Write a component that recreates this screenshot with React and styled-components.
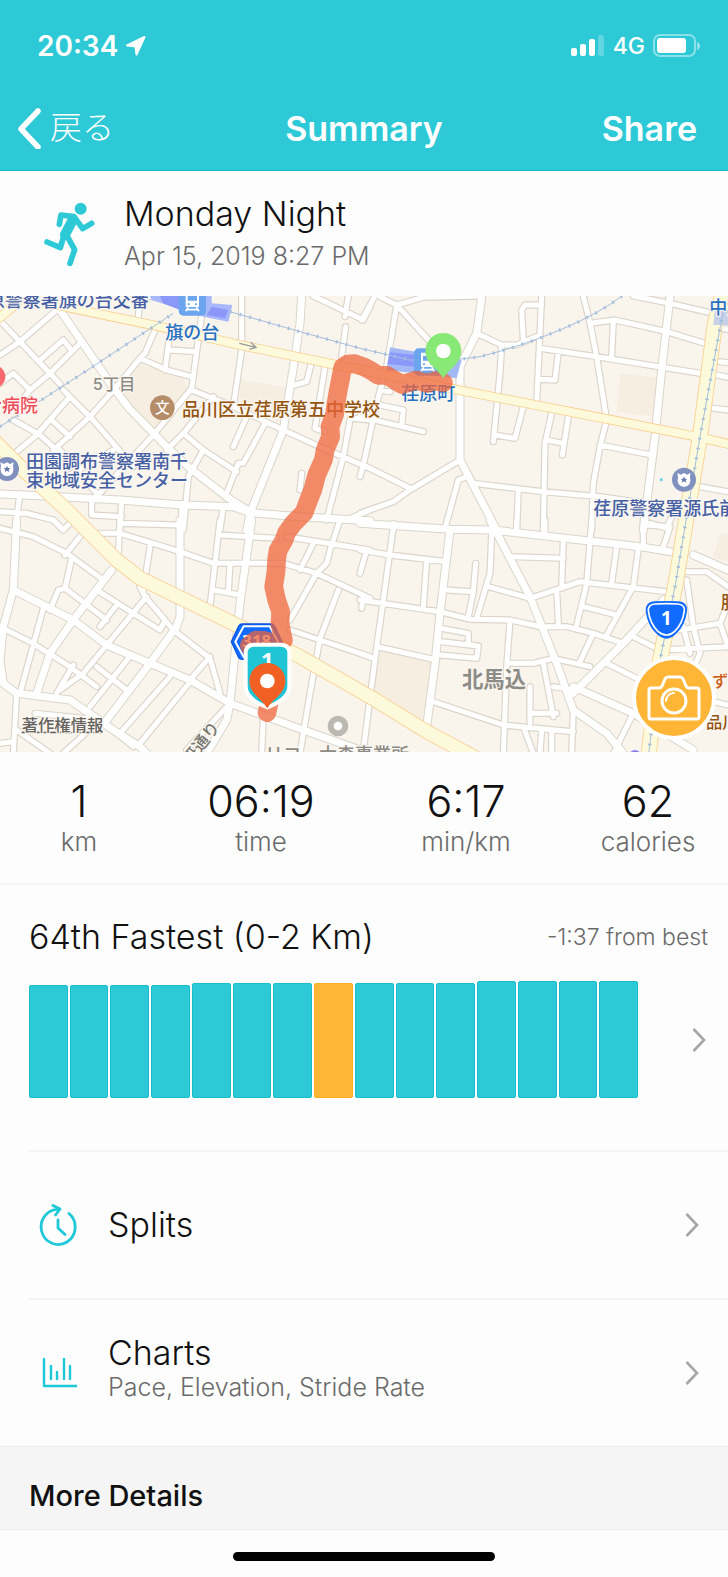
import styled, { createGlobalStyle } from 'styled-components';

const GlobalStyle = createGlobalStyle`
  * {
    box-sizing: border-box;
  }

  body {
    margin: 0;
    background: #fdfdfd;
    color: #111;
    font-family: Inter, 'Noto Sans CJK JP', sans-serif;
    font-weight: 300;
  }

  h1, h2, h3, p, dl, dt, dd {
    margin: 0;
    font-weight: inherit;
  }

  button {
    border: 0;
    padding: 0;
    background: none;
    color: inherit;
    font: inherit;
    cursor: pointer;
  }
`;

const Header = styled.header`
  background: #2dc9d7;
  border-bottom: 1px solid #12bccb;
  color: #fff;
`;

const StatusBar = styled.div`
  display: flex;
  align-items: center;
  justify-content: space-between;
  height: 86px;
  padding: 5px 27px 0 37px;
`;

const StatusGroup = styled.div`
  display: flex;
  align-items: center;
  gap: 8px;
`;

const Clock = styled.span`
  font-size: 28px;
  font-weight: 600;
`;

const Network = styled.span`
  font-size: 23px;
  font-weight: 500;
`;

const NavBar = styled.nav`
  display: grid;
  grid-template-columns: 1fr auto 1fr;
  align-items: center;
  height: 84px;
  padding: 0 17px;
`;

const BackButton = styled.button`
  display: flex;
  align-items: center;
  gap: 8px;
  justify-self: start;
  font-size: 32px;
  line-height: 40px;
`;

const NavTitle = styled.h1`
  font-size: 34px;
  font-weight: 600;
`;

const ShareButton = styled.button`
  justify-self: end;
  margin-right: 14px;
  font-size: 34px;
  font-weight: 600;
`;

const Activity = styled.section`
  display: flex;
  align-items: center;
  gap: 27px;
  height: 125px;
  padding: 4px 40px 0;
`;

const Title = styled.h2`
  font-size: 34px;
  line-height: 40px;
`;

const Caption = styled.p`
  color: #6b6b6b;
  font-size: ${(props) => (props.$small ? '23px' : '25px')};
  line-height: ${(props) => (props.$tight ? '28px' : '44px')};
`;

const MapArea = styled.section`
  position: relative;
  height: 456px;
  overflow: hidden;

  > svg {
    display: block;
    width: 100%;
    height: 100%;
  }
`;

const CameraButton = styled.button`
  position: absolute;
  right: 12px;
  bottom: 12px;
  display: grid;
  place-items: center;
  width: 84px;
  height: 84px;
  border: 4px solid #fff;
  border-radius: 50%;
  background: #ffb536;
`;

const Stats = styled.dl`
  display: grid;
  grid-template-columns: 158fr 206fr 204fr 160fr;
  height: 133px;
  padding-top: 24px;
  border-bottom: 2px solid #f4f4f4;
  text-align: center;
`;

const Stat = styled.div`
  display: flex;
  flex-direction: column-reverse;
  justify-content: flex-end;

  dd {
    font-size: 43px;
    line-height: 50px;
  }

  dt {
    color: #6b6b6b;
    font-size: 26px;
    line-height: 32px;
  }
`;

const Ranking = styled.section`
  height: 265px;
  padding: 32px 20px 0 29px;
`;

const RankingHead = styled.div`
  display: flex;
  align-items: center;
  justify-content: space-between;
  height: 40px;
`;

const ChartButton = styled.button`
  display: flex;
  align-items: center;
  justify-content: space-between;
  width: 100%;
  height: 117px;
  padding-right: 2px;
  margin-top: 24px;
`;

const Bars = styled.span`
  display: flex;
  align-items: flex-end;
  gap: 2px;
  flex: 1;
  margin-right: 54px;
  height: 117px;
`;

const Bar = styled.span`
  flex: 1;
  border: 1px solid ${(props) => (props.$current ? '#ffad22' : '#17becd')};
  border-radius: 2px;
  background: ${(props) => (props.$current ? '#ffb536' : '#2dc9d7')};
`;

const LinkRow = styled.button`
  display: flex;
  align-items: center;
  width: calc(100% - 29px);
  height: 148px;
  margin-left: 29px;
  padding: 0 29px 0 10px;
  border-top: 2px solid #f4f4f4;
  text-align: left;
`;

const RowText = styled.span`
  flex: 1;
  margin-left: 31px;
  padding-bottom: ${(props) => (props.$raised ? '12px' : '0')};
`;

const Details = styled.section`
  height: 84px;
  padding: 29px 29px 0;
  border: solid #ececec;
  border-width: 1px 0;
  background: #f5f5f5;

  h3 {
    font-size: 29px;
    font-weight: 500;
    line-height: 40px;
  }
`;

const Footer = styled.footer`
  display: flex;
  justify-content: center;
  height: 48px;
  padding-top: 22px;
`;

const HomeIndicator = styled.span`
  width: 36%;
  height: 9px;
  border-radius: 5px;
  background: #000;
`;

// The map is drawn in tiles: each has its own origin.
const TILES = [
  {
    x: 0,
    y: 0,
    wide: 'M0 612L180 620L360 630L545 645L700 650L750 668L900 680L1110 692M180 60L245 155L345 300L390 358L510 480L570 535L690 628L750 665M905 18L900 100L885 200L850 420L750 670L740 720',
    thin: 'M0 195L60 155L170 60M0 92L60 155L140 240L180 282M190 150L210 175M190 150L115 215M245 155L200 200L150 250L90 300L40 250L0 280M90 300L60 340M420 205L350 290L270 380L210 435L160 480M190 300L270 380L340 460L400 530M40 390L120 435L175 485M210 320L110 435L50 485M160 395L210 440M465 120L435 190L420 205L500 240L575 260M510 130L495 240M510 180L590 185M605 75L590 185L575 295L530 350L460 435L390 510L290 620M180 480L290 610M340 480L200 560M575 300L700 350L850 420L970 475L1110 535M640 320L550 430L500 480M550 430L610 480L710 545M795 400L730 520L715 520L680 610M740 380L700 470M610 480L565 560L550 720M725 18L725 180L700 350M885 285L920 275L935 215M1037 110L1025 200M975 230L945 415L975 425M60 610L45 720M275 630L275 675L365 680M365 630L360 720M545 640L545 720M0 665L80 670L160 690L190 720M670 650L660 720M1110 390L1060 385M1050 390L1030 500L980 690M905 550L900 600M940 18L1090 90L1110 50M1045 18L1035 80M420 18L415 80M440 18L560 30M1110 660L1040 690',
  },
  {
    x: 1080,
    y: 0,
    wide: 'M365 25L350 130L300 230L300 510L410 720M930 18L905 240L885 440L870 560L850 720',
    thin: 'M110 45L190 22L365 18M110 45L80 230L50 340L10 525L0 560M110 45L210 155M110 45L60 20M45 18L5 90M300 510L150 600L100 635L0 670M10 525L150 595M320 560L295 570L255 715M340 580L550 605L720 620L860 640M350 130L425 165L470 165L540 135M545 18L530 340M545 45L495 45L485 60L490 150M425 165L420 250L400 455M405 435L465 445L490 350M540 175L710 200L1020 250M595 185L585 270L535 268M670 18L690 100L710 200L740 390L720 470L700 580L695 720M690 100L765 90L920 125L1050 165M760 95L755 200M820 18L930 40L1060 70M720 465L875 495M575 370L555 460L550 720M625 380L607 495M560 450L610 460M1080 115L1104 118M1080 215L1104 218M1070 255L1104 262M1060 355L1104 360M1020 590L1104 605M475 600L470 720M60 345L130 360L125 405M0 380L190 425M60 300L90 305M870 700L920 715L935 680M100 700L100 720',
  },
  {
    x: 0,
    y: 690,
    wide: 'M50 0L40 210L10 320L0 420L10 490L50 520L210 540L340 630L420 680L440 700M40 210L220 300L320 375L450 430L570 480L690 550L910 630L1080 690M335 150L220 300L150 400L110 520M530 320L450 430L320 600M540 0L540 290L525 330M755 0L720 250L690 550L680 600L620 700',
    thin: 'M0 25L100 50L200 100L310 180M160 0L190 30L210 10M240 50L195 105M215 115L195 205L175 210L150 270M290 210L400 280L480 330L495 300L435 230L420 200M435 230L520 330L630 415L660 520M440 230L320 375L250 460L180 510M195 205L320 300M350 255L300 320M0 320L90 365L210 440L290 500M130 265L60 520M220 435L170 520M290 440L380 510M385 415L270 560M270 40L360 40L540 95L640 130L850 130L950 160L1110 235M360 0L355 100M360 10L540 15M450 80L430 210M660 0L630 260M640 210L720 225M690 130L685 215M660 45L830 55M1020 0L990 90L980 130L950 160L870 300M940 70L900 150M860 50L1110 90M1100 90L1080 160M1015 210L960 355L930 520L900 700M870 330L960 360L1110 410M1090 230L1085 265M510 470L360 640M575 480L420 670M630 410L570 480M790 590L785 700M690 550L560 690M105 580L300 600L400 680M50 520L40 700M50 630L150 700M0 670L40 665M300 600L190 700',
  },
  {
    x: 1080,
    y: 690,
    wide: 'M0 10L270 28L400 30L840 80L930 95M1000 105L1104 150M270 30L240 280L225 430L200 620M390 0L510 230L590 430L640 570L740 640L790 700M910 240L790 370L640 520M640 500L820 580L1000 690',
    thin: 'M0 90L90 105L260 125M100 20L70 240L50 380L10 690M200 120L190 260M0 240L240 275L330 298L450 300L540 320L620 320L700 340L790 370M260 210L340 215M347 130L340 215L325 290M395 40L390 160L350 295M385 200L510 235L660 185L920 215M460 110L610 115M610 60L605 205M695 0L680 190L650 315M590 210L595 310M770 80L755 190M835 85L820 200L740 345M670 260L770 285M850 0L850 80M860 15L930 20L910 80M555 0L555 40M470 0L470 30M980 155L1040 155L1104 200M980 180L1000 320L1020 400L990 470M700 340L660 425M820 350L900 390L1104 380M450 430L520 430L580 415L690 440M740 430L840 480M580 500L640 510M450 300L440 440L430 700M550 430L580 590M510 500L510 610M510 580L590 580M220 545L430 615L640 635M490 620L520 700M545 630L540 700M640 570L635 700M575 630L575 700M820 580L760 700M245 325L325 340L325 375M245 365L355 378L350 415L240 405M50 380L230 420M0 400L40 415M960 330L1080 310L1104 250M1080 310L1104 380M970 320L990 400M1060 545L1104 555',
  },
];

const AVENUE = 'M150 40L250 62L480 110L720 165L1010 225L1365 298L1810 385L2090 440L2200 465';
const HIGHWAY = 'M-20 450L60 530L200 660L350 810L420 865L720 1010L900 1100L1110 1220L1280 1325L1420 1400';
const NATIONAL = 'M2170 0L2145 100L2100 440L2055 710L2025 890L1980 1110L1945 1400';
const RAILWAYS = [
  'M0 410L240 255L520 70',
  'M690 65L900 125L1080 175L1230 210Q1350 215 1440 200Q1560 170 1680 120Q1800 70 1870 15',
  'M2170 60L2100 440L2055 710L2025 890L1980 1110L1945 1400',
];
const ROUTE =
  'M1330 278L1306 272L1280 280L1250 270L1206 284L1180 268L1160 256L1135 256L1110 240L1090 230L1065 221L1042 222L1028 232L1022 265L1015 300L1008 340L1004 372L990 410L992 440L976 478L970 510L950 555L938 600L926 630L912 668L880 700L860 728L852 750L834 782L830 808L828 845L821 890L830 930L842 965L840 1000L850 1050L832 1062L795 1052L768 1050L748 1066L785 1120L806 1160L808 1235L801 1268';

const Streets = ({ color, wide, thin }) =>
  TILES.map((tile) => (
    <g key={`${tile.x}-${tile.y}`} transform={`translate(${tile.x} ${tile.y})`} stroke={color}>
      <path d={tile.thin} strokeWidth={thin} />
      <path d={tile.wide} strokeWidth={wide} />
    </g>
  ));

const Yellow = ({ color, extra }) => (
  <g stroke={color}>
    <path d={AVENUE} strokeWidth={24 + extra} />
    <path d={HIGHWAY} strokeWidth={40 + extra} />
    <path d={NATIONAL} strokeWidth={43 + extra} />
  </g>
);

const MapLabel = styled.text`
  fill: ${(props) => props.$color};
  font-size: ${(props) => props.$size || 54}px;
  font-weight: ${(props) => (props.$bold ? 700 : 500)};
  paint-order: stroke;
  stroke: #fbf7f0;
  stroke-width: 7px;
  stroke-linejoin: round;
`;

const PoliceMark = ({ x, y }) => (
  <g transform={`translate(${x} ${y})`}>
    <circle r="36" fill="#8191bf" />
    <path d="M-20 -20L-9 -15L0 -20L9 -15L20 -20L18 -8Q24 18 0 22Q-24 18 -18 -8Z" fill="#fff" />
    <path d="M0 -10L3 -3L10 -3L5 2L7 9L0 5L-7 9L-5 2L-10 -3L-3 -3Z" fill="#6478b0" />
  </g>
);

const TrainMark = ({ x, y }) => (
  <g transform={`translate(${x} ${y})`}>
    <rect x="-41" y="-41" width="82" height="82" rx="14" fill="#6aa5ee" />
    <path
      fillRule="evenodd"
      d="M-20 -28H20V15H-20ZM-14 -18V-4H14V-18ZM-14 4V9H-8V4ZM8 4V9H14V4Z"
      fill="#fff"
    />
    <path d="M-12 16L-20 28M12 16L20 28M-16 23H16" stroke="#fff" strokeWidth="5" />
  </g>
);

const PIN = 'M0 82C-18 52 -54 38 -54 0A54 54 0 0 1 54 0C54 38 18 52 0 82Z';

const RouteMap = () => (
  <svg viewBox="0 18 2184 1368" preserveAspectRatio="xMidYMid slice" role="img" aria-label="Route">
    <rect width="2184" height="1400" fill="#f9f4ec" />
    <path d="M420 225L540 255L570 300L460 430L390 350L355 290Z" fill="#f7eee2" />
    <path d="M720 270L870 295L850 400L720 350ZM1860 250L1980 265L1965 380L1850 365Z" fill="#f7eee2" />
    <path d="M1140 1080L1300 1110L1275 1290L1110 1220ZM2160 730L2200 740V820L2140 800Z" fill="#f7eee2" />
    <g fill="none" strokeLinejoin="round" strokeLinecap="round">
      <Streets color="#dbd5cb" wide={27} thin={22} />
      <Streets color="#fff" wide={21} thin={15} />
      <path d="M-10 90L50 40" stroke="#f9d79e" strokeWidth="30" />
      <path d="M-10 90L50 40" stroke="#fcfada" strokeWidth="24" />
      <Yellow color="#f8cf91" extra={5} />
      <Yellow color="#fcfada" extra={0} />
    </g>
    <path d="M450 18H635V40L697 45L685 95L610 80L455 30Z" fill="#a9b8fa" />
    <path d="M480 18H540V60L490 40ZM635 50L685 60L675 85L620 75Z" fill="#8b98fa" />
    <path d="M1170 172L1385 210L1370 265L1160 240Z" fill="#a3b9f6" />
    <path d="M1170 187L1245 195V230L1162 222Z" fill="#8b98fa" />
    <path d="M2145 60H2184V105H2140Z" fill="#c6d1e8" />
    <g fill="none" stroke="#a5bedd">
      {RAILWAYS.map((d) => (
        <g key={d}>
          <path d={d} strokeWidth="3" />
          <path d={d} strokeWidth="10" strokeDasharray="5 25" />
        </g>
      ))}
    </g>
    <path d="M718 160L768 172M752 157L768 172L748 178" fill="none" stroke="#999" strokeWidth="4" />

    <TrainMark x={577} y={36} />
    <TrainMark x={1283} y={216} />
    <circle cx="-18" cy="260" r="34" fill="#f5696f" />
    <circle cx="487" cy="353" r="37" fill="#b58d68" />
    <text x="487" y="369" textAnchor="middle" fontSize="44" fontWeight="500" fill="#fff">文</text>
    <PoliceMark x={21} y={537} />
    <PoliceMark x={2052} y={569} />
    <circle cx="1984" cy="569" r="5" fill="#79d4ef" />

    <MapLabel x="-40" y="52" $color="#4560a5">原警察署旗の台交番</MapLabel>
    <MapLabel x="496" y="146" $color="#2870c0">旗の台</MapLabel>
    <MapLabel x="278" y="300" $size={49} $color="#8d8b86">5丁目</MapLabel>
    <MapLabel x="-48" y="366" $color="#ef4d5b">合病院</MapLabel>
    <MapLabel x="546" y="377" $color="#945510">品川区立荏原第五中学校</MapLabel>
    <MapLabel x="78" y="534" $color="#4560a5">田園調布警察署南千</MapLabel>
    <MapLabel x="78" y="592" $color="#4560a5">束地域安全センター</MapLabel>
    <MapLabel x="1204" y="329" $color="#2870c0">荏原町</MapLabel>
    <MapLabel x="2128" y="72" $color="#2870c0">中延</MapLabel>
    <MapLabel x="1780" y="676" $color="#4560a5">荏原警察署源氏前</MapLabel>
    <MapLabel x="1386" y="1192" $size={64} $bold $color="#8d8b86">北馬込</MapLabel>
    <MapLabel x="2162" y="957" $color="#945510">服部</MapLabel>
    <MapLabel x="2136" y="1192" $size={49} $color="#cf5c14">ずみ</MapLabel>
    <MapLabel x="2118" y="1314" $size={49} $color="#945510">品川</MapLabel>
    <MapLabel x="795" y="1412" $color="#8d8b86">リコー大森事業所</MapLabel>
    <MapLabel $size={49} $color="#77756f" textAnchor="end" transform="translate(662 1312) rotate(-52)">
      研通り
    </MapLabel>
    <MapLabel x="65" y="1322" $size={49} $color="#66635f" textDecoration="underline">
      著作権情報
    </MapLabel>
    <circle cx="1014" cy="1308" r="22" fill="#fff" stroke="#bcb9b3" strokeWidth="18" />
    <circle cx="1905" cy="1398" r="18" fill="#8b80ee" />

    <path d="M727 1002H813Q820 1002 824 1008L846 1055L824 1103Q820 1108 813 1108H727Q720 1108 716 1103L694 1055L716 1008Q720 1002 727 1002Z" fill="#126bff" stroke="#0b55e0" strokeWidth="4" />
    <path d="M731 1009H809L834 1055L809 1101H731L706 1055Z" fill="none" stroke="#fff" strokeWidth="6" />
    <text x="770" y="1071" textAnchor="middle" fill="#fff" fontSize="50" fontWeight="700" fontFamily="Noto Sans">318</text>
    <path d="M1963 934Q2000 932 2035 934Q2063 936 2061 962Q2056 1005 2030 1030Q2000 1062 1968 1030Q1942 1005 1937 962Q1936 936 1963 934Z" fill="#126bff" />
    <path d="M1965 942Q2000 940 2033 942Q2055 944 2053 962Q2048 1001 2024 1024Q2000 1046 1974 1024Q1950 1001 1945 962Q1944 944 1965 942Z" fill="none" stroke="#fff" strokeWidth="5" />
    <text x="1999" y="1005" textAnchor="middle" fill="#fff" fontSize="56" fontWeight="700" fontFamily="Noto Sans">1</text>

    <path d={ROUTE} fill="none" stroke="#ef6438" strokeOpacity="0.74" strokeWidth="56" strokeLinejoin="round" strokeLinecap="round" />

    <path d="M762 1064H842Q868 1064 868 1090V1190Q866 1228 802 1252Q738 1228 737 1190V1090Q737 1064 762 1064Z" fill="#1fc5d5" stroke="#fff" strokeWidth="12" />
    <text x="802" y="1134" textAnchor="middle" fill="#fff" fontSize="66" fontWeight="700" fontFamily="Noto Sans">1</text>
    <g transform="translate(802 1173)">
      <path d={PIN} fill="#f26024" />
      <circle r="22" fill="#fff" />
    </g>
    <g transform="translate(1330 183)">
      <path d={PIN} fill="#89e976" />
      <circle r="22" fill="#fff" />
    </g>
  </svg>
);

const Chevron = () => (
  <svg width="14" height="26" viewBox="0 0 14 26" fill="none" stroke="#a6a6a6" strokeWidth="2.6">
    <path d="M1.500 2L12 13L1.500 24" />
  </svg>
);

const RunnerIcon = () => (
  <svg width="57" height="70" viewBox="120 60 171 210" fill="none" stroke="#2dc9d7" strokeLinecap="round" strokeLinejoin="round">
    <circle cx="242" cy="83" r="18" fill="#2dc9d7" stroke="none" />
    <path d="M178 130L183 102L222 107L248 143L275 127" strokeWidth="17" />
    <path d="M219 115L195 161" strokeWidth="30" />
    <path d="M192 163L181 200L141 183" strokeWidth="17" />
    <path d="M201 165L224 206L210 247" strokeWidth="17" />
  </svg>
);

const SplitsIcon = () => (
  <svg width="38" height="42" viewBox="0 0 38 42" fill="none" stroke="#1fc8d8" strokeWidth="2.8" strokeLinecap="round" strokeLinejoin="round">
    <path d="M30 9.500A17 17.500 0 1 1 20 5.500" />
    <path d="M14 1.500L21 5L16.500 11" />
    <path d="M19 16V24L26 30.500" />
  </svg>
);

const ChartsIcon = () => (
  <svg width="38" height="42" viewBox="0 0 38 42" fill="none" stroke="#1fc8d8" strokeWidth="2.4" strokeLinecap="round" strokeLinejoin="round">
    <path d="M5 7V34H38M12 14V27M18 20V27M25 7V27M31 14V27" />
  </svg>
);

const stats = [
  { value: '1', label: 'km' },
  { value: '06:19', label: 'time' },
  { value: '6:17', label: 'min/km' },
  { value: '62', label: 'calories' },
];

const runs = [113, 113, 113, 113, 115, 115, 115, 115, 115, 115, 115, 117, 117, 117, 117];
const currentRun = 7;

const App = () => (
  <>
    <GlobalStyle />
    <Header>
      <StatusBar>
        <StatusGroup>
          <Clock>20:34</Clock>
          <svg width="20" height="20" viewBox="0 0 20 20" fill="#fff" stroke="#fff" strokeLinejoin="round">
            <path d="M18.500 1L10.500 18.500L9.500 10.500L1 9.500Z" strokeWidth="2" />
          </svg>
        </StatusGroup>
        <StatusGroup>
          <svg width="34" height="22" viewBox="0 0 34 22" fill="#fff">
            <rect x="0" y="13" width="6" height="8" rx="2" />
            <rect x="9" y="9" width="6" height="12" rx="2" />
            <rect x="18" y="4" width="6" height="17" rx="2" />
            <rect x="27" y="0" width="6" height="21" rx="2" opacity="0.25" />
          </svg>
          <Network>4G</Network>
          <svg width="48" height="24" viewBox="0 0 48 24">
            <rect x="1" y="1" width="41" height="21" rx="6" fill="none" stroke="#fff" strokeWidth="2" opacity="0.45" />
            <rect x="4" y="4" width="29" height="15" rx="3" fill="#fff" />
            <path d="M44 8Q47 9 47 12Q47 15 44 16Z" fill="#fff" opacity="0.5" />
          </svg>
        </StatusGroup>
      </StatusBar>
      <NavBar>
        <BackButton>
          <svg width="25" height="42" viewBox="0 0 25 42" fill="none" stroke="#fff" strokeWidth="5.500" strokeLinecap="round" strokeLinejoin="round">
            <path d="M21 4L4 22L21 40" />
          </svg>
          戻る
        </BackButton>
        <NavTitle>Summary</NavTitle>
        <ShareButton>Share</ShareButton>
      </NavBar>
    </Header>

    <main>
      <Activity>
        <RunnerIcon />
        <div>
          <Title>Monday Night</Title>
          <Caption>Apr 15, 2019 8:27 PM</Caption>
        </div>
      </Activity>

      <MapArea>
        <RouteMap />
        <CameraButton aria-label="Add photo">
          <svg width="54" height="46" viewBox="0 0 54 46" fill="none" stroke="#fff" strokeWidth="3" strokeLinejoin="round">
            <path d="M4 13H12Q14 13 15 11L18 4Q19 2 21 2H33Q35 2 36 4L39 11Q40 13 42 13H50Q52 13 52 15V42Q52 44 50 44H4Q2 44 2 42V15Q2 13 4 13Z" />
            <circle cx="27" cy="26" r="12" />
            <path d="M19 26A8 8 0 0 1 27 18" strokeWidth="2" strokeLinecap="round" />
          </svg>
        </CameraButton>
      </MapArea>

      <Stats>
        {stats.map(({ value, label }) => (
          <Stat key={label}>
            <dt>{label}</dt>
            <dd>{value}</dd>
          </Stat>
        ))}
      </Stats>

      <Ranking>
        <RankingHead>
          <Title as="h3">64th Fastest (0-2 Km)</Title>
          <Caption $small>-1:37 from best</Caption>
        </RankingHead>
        <ChartButton aria-label="Show ranking">
          <Bars>
            {runs.map((height, index) => (
              <Bar key={index} $current={index === currentRun} style={{ height }} />
            ))}
          </Bars>
          <Chevron />
        </ChartButton>
      </Ranking>

      <LinkRow>
        <SplitsIcon />
        <RowText>
          <Title as="span">Splits</Title>
        </RowText>
        <Chevron />
      </LinkRow>
      <LinkRow>
        <ChartsIcon />
        <RowText $raised>
          <Title as="span">Charts</Title>
          <Caption as="div" $tight>Pace, Elevation, Stride Rate</Caption>
        </RowText>
        <Chevron />
      </LinkRow>

      <Details>
        <h3>More Details</h3>
      </Details>
    </main>

    <Footer>
      <HomeIndicator />
    </Footer>
  </>
);

export default App;
